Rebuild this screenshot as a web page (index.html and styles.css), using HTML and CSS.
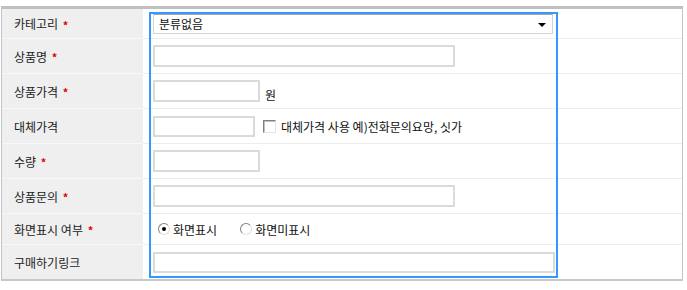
FILE: index.html
```html
<!DOCTYPE html>
<html>
    <head>
        <meta charset="UTF-8" />
        <title>상품 등록</title>
        <link rel="stylesheet" href="styles.css">
    </head>

    <body>
        <div class="form-table">
            <div class="form-row row-select">
                <div class="label">카테고리 <span class="req">*</span></div>
                <div class="value">
                    <div class="select-box">
                        <span>분류없음</span>
                    </div>
                </div>
            </div>
            <div class="form-row">
                <div class="label">상품명 <span class="req">*</span></div>
                <div class="value">
                    <input type="text" class="input input-long">
                </div>
            </div>
            <div class="form-row">
                <div class="label">상품가격 <span class="req">*</span></div>
                <div class="value">
                    <input type="text" class="input input-short">
                    <span class="unit">원</span>
                </div>
            </div>
            <div class="form-row">
                <div class="label">대체가격</div>
                <div class="value">
                    <input type="text" class="input input-alt">
                    <label class="check-label">
                        <input type="checkbox" class="check">
                        대체가격 사용 예)전화문의요망, 싯가
                    </label>
                </div>
            </div>
            <div class="form-row">
                <div class="label">수량 <span class="req">*</span></div>
                <div class="value">
                    <input type="text" class="input input-short">
                </div>
            </div>
            <div class="form-row">
                <div class="label">상품문의 <span class="req">*</span></div>
                <div class="value">
                    <input type="text" class="input input-long">
                </div>
            </div>
            <div class="form-row row-radio">
                <div class="label">화면표시 여부 <span class="req">*</span></div>
                <div class="value radio-group">
                    <label class="radio-label">
                        <input type="radio" name="display" class="radio" checked>
                        화면표시
                    </label>
                    <label class="radio-label">
                        <input type="radio" name="display" class="radio">
                        화면미표시
                    </label>
                </div>
            </div>
            <div class="form-row row-last">
                <div class="label">구매하기링크</div>
                <div class="value">
                    <input type="text" class="input input-link">
                </div>
            </div>

            <!-- focus highlight over the input column -->
            <div class="focus-box"></div>
        </div>
    </body>
</html>
```

FILE: styles.css
```css
* {
    margin: 0;
    padding: 0;
    box-sizing: border-box;
}

body {
    padding: 6px 0 0 1px;
    background: #ffffff;
    font-family: "Noto Sans CJK KR", "Noto Sans", sans-serif;
    font-size: 12px;
    color: #222;
}

.form-table {
    position: relative;
    width: 682px;
    border: 1px solid #c4c4c4;
    border-top: 3px solid #c0c0c0;
    border-bottom: 2px solid #c8c8c8;
}

.form-row {
    display: grid;
    grid-template-columns: 141px 1fr;
    height: 35px;
}

.row-select {
    height: 30px;
}

.row-radio {
    height: 31px;
}

.row-last {
    height: 34px;
}

.label {
    display: flex;
    align-items: center;
    padding-left: 12px;
    background: #efefef;
    border-bottom: 1px solid #f8f8f8;
    color: #222;
    white-space: pre;
}

.value {
    display: flex;
    align-items: center;
    padding-left: 10px;
    border-bottom: 1px solid #ececec;
}

.row-last .label,
.row-last .value {
    border-bottom: none;
}

.req {
    color: #e00000;
    font-weight: bold;
    font-size: 11px;
    margin-left: 2px;
    position: relative;
    top: 1px;
}

.select-box {
    position: relative;
    width: 400px;
    height: 20px;
    border: 1px solid #d4d4d4;
    border-top-color: #a8a8a8;
    display: flex;
    align-items: center;
    padding-left: 5px;
    color: #111;
}

/* dropdown arrow */
.select-box::after {
    content: "";
    position: absolute;
    right: 6px;
    top: 8px;
    border-left: 4px solid transparent;
    border-right: 4px solid transparent;
    border-top: 4px solid #000;
}

.input {
    height: 22px;
    border: 2px solid #dadada;
    background: #fff;
    font-family: inherit;
    font-size: 12px;
    outline: none;
}

.input-long {
    width: 302px;
}

.input-short {
    width: 107px;
}

.input-alt {
    width: 102px;
    height: 21px;
}

.input-link {
    width: 402px;
    height: 21px;
}

.unit {
    margin-left: 5px;
    color: #111;
    padding-top: 6px;
}

.check-label,
.radio-label {
    display: flex;
    align-items: center;
    color: #111;
}

.check-label {
    margin-left: 8px;
}

.check {
    appearance: none;
    width: 13px;
    height: 13px;
    margin-right: 5px;
    background: #fff;
    border: 1px solid;
    border-color: #808080 #e4e4e4 #e4e4e4 #808080;
    box-shadow: inset 1px 1px 0 #c0c0c0;
}

.radio-group {
    padding-left: 15px;
}

.radio-label + .radio-label {
    margin-left: 23px;
}

.radio {
    appearance: none;
    position: relative;
    width: 12px;
    height: 12px;
    margin-right: 3px;
    border-radius: 50%;
    background: #fff;
    border: 1px solid;
    border-color: #808080 #e0e0e0 #e0e0e0 #808080;
}

.radio:checked::after {
    content: "";
    position: absolute;
    left: 3px;
    top: 3px;
    width: 4px;
    height: 4px;
    border-radius: 50%;
    background: #000;
}

.focus-box {
    position: absolute;
    left: 147px;
    top: 3px;
    width: 409px;
    height: 266px;
    border: 2px solid #3399ff;
    pointer-events: none;
}
```
